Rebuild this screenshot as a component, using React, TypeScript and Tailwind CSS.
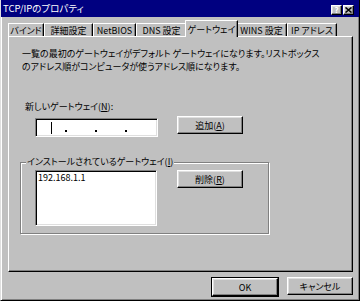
import React from "react";

const raised =
  "border border-t-white border-l-white border-r-black border-b-black shadow-[inset_-1px_-1px_#808080,inset_1px_1px_#dfdfdf] bg-[#c0c0c0]";
const sunken =
  "border border-t-[#808080] border-l-[#808080] border-r-white border-b-white shadow-[inset_1px_1px_#000,inset_-1px_-1px_#dfdfdf] bg-white";

function Btn({ children, w, cls = "" }: { children: React.ReactNode; w: string; cls?: string }) {
  return (
    <div className={`${raised} ${w} h-[18px] flex items-center justify-center text-black ${cls}`}>
      {children}
    </div>
  );
}

function Tab({ label, w, selected }: { label: string; w: string; selected?: boolean }) {
  if (selected) {
    return (
      <div
        className={`${w} h-[17px] mx-[-2px] relative z-10 mb-[-1px] bg-[#c0c0c0] border-l border-t border-l-white border-t-white border-r border-r-black shadow-[inset_-1px_0_#808080] rounded-tl-[1px] flex items-start justify-center pt-[2px]`}
      >
        {label}
      </div>
    );
  }
  return (
    <div
      className={`${w} h-[13px] bg-[#c0c0c0] border-l border-t border-l-white border-t-white border-r border-r-black shadow-[inset_-1px_0_#808080] flex items-center justify-center`}
    >
      {label}
    </div>
  );
}

export default function App() {
  return (
    <div className="w-[360px] h-[301px] bg-[#c0c0c0] font-['Noto_Sans_CJK_JP',sans-serif] [font-feature-settings:'palt'] text-[9px] leading-[13px] text-black border-l border-l-[#dfdfdf] border-r border-r-black border-b border-b-black shadow-[inset_1px_0_#fff,inset_-1px_-1px_#808080] flex flex-col overflow-hidden">
      {/* Title bar */}
      <div className="h-[17px] bg-[#000080] flex items-center pl-[2px] pr-[5px] text-white text-[9.5px]">
        <span className="flex-1">TCP/IPのプロパティ</span>
        <div className="flex gap-[1px] mt-[2px]">
          <div className={`${raised} w-[11px] h-[10px] flex items-center justify-center text-[8px] font-bold leading-none`}>
            ?
          </div>
          <div className={`${raised} w-[11px] h-[10px] flex items-center justify-center`}>
            <svg width="7" height="6" viewBox="0 0 7 6">
              <path d="M0.5 0.5 L6.5 5.5 M6.5 0.5 L0.5 5.5" stroke="#000" strokeWidth="1.5" />
            </svg>
          </div>
        </div>
      </div>

      <div className="pl-[7px] flex flex-col">
        {/* Tabs */}
        <div className="mt-[4px] h-[15px] flex items-end">
          <Tab label="バインド" w="w-[36px]" />
          <Tab label="詳細設定" w="w-[49px]" />
          <Tab label="NetBIOS" w="w-[43px]" />
          <Tab label="DNS 設定" w="w-[51px]" />
          <Tab label="ゲートウェイ" w="w-[53px]" selected />
          <Tab label="WINS 設定" w="w-[51px]" />
          <Tab label="IP アドレス" w="w-[50px]" />
        </div>

        {/* Panel */}
        <div className="w-[345px] h-[236px] border border-t-white border-l-white border-r-black border-b-black shadow-[inset_-1px_-1px_#808080] flex flex-col">
          <div className="ml-[13px] mt-[10px]">
            <div className="whitespace-nowrap">一覧の最初のゲートウェイがデフォルト ゲートウェイになります。リストボックス</div>
            <div className="whitespace-nowrap">のアドレス順がコンピュータが使うアドレス順になります。</div>
          </div>

          <div className="ml-[16px] mt-[27px]">
            新しいゲートウェイ(<span className="underline">N</span>):
          </div>

          <div className="flex items-start mt-[3px]">
            <div className={`${sunken} ml-[26px] mt-[2px] w-[123px] h-[19px] relative`}>
              <div className="absolute left-[15px] top-[3px] w-[1px] h-[12px] bg-black" />
              <div className="absolute left-[29px] top-[11px] w-[1.5px] h-[1.5px] bg-black" />
              <div className="absolute left-[59px] top-[11px] w-[1.5px] h-[1.5px] bg-black" />
              <div className="absolute left-[89px] top-[11px] w-[1.5px] h-[1.5px] bg-black" />
            </div>
            <Btn w="w-[66px]" cls="ml-[19px]">
              追加(<span className="underline">A</span>)
            </Btn>
          </div>

          {/* Group box */}
          <div className="ml-[11px] mt-[25px] w-[249px] h-[72px] border border-[#808080] shadow-[1px_1px_0_#fff,inset_1px_1px_0_#fff] relative flex items-start pl-[14px] pt-[7px]">
            <div className="absolute left-[5px] top-[-8px] bg-[#c0c0c0] px-[1px] whitespace-nowrap">
              インストールされているゲートウェイ(<span className="underline">I</span>)
            </div>
            <div className={`${sunken} w-[122px] h-[56px] pl-[2px] pt-[1px]`}>
              <div className="text-[9px] leading-[11px]">192.168.1.1</div>
            </div>
            <Btn w="w-[66px]" cls="ml-[20px]">
              削除(<span className="underline">R</span>)
            </Btn>
          </div>
        </div>

        {/* Bottom buttons */}
        <div className="flex mt-[5px] ml-[203px]">
          <div className="border border-black">
            <Btn w="w-[66px]" cls="h-[16px]">OK</Btn>
          </div>
          <Btn w="w-[66px]" cls="ml-[8px] h-[17px]">
            キャンセル
          </Btn>
        </div>
      </div>
    </div>
  );
}
